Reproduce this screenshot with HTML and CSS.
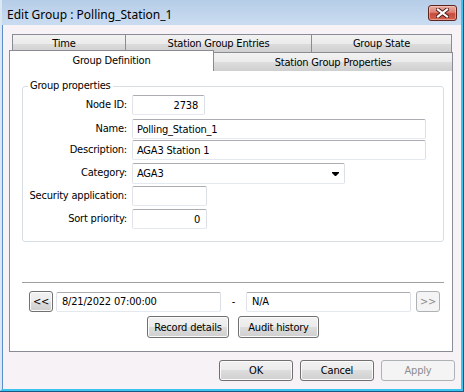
FILE: index.html
```html
<!DOCTYPE html>
<html lang="en">
<head>
	<meta charset="UTF-8">
	<title>Edit Group</title>
	<link rel="stylesheet" href="styles.css">
</head>
<body>
<div class="window">
	<div class="titlebar">
		<span class="title">Edit Group : Polling_Station_1</span>
		<div class="close">
			<svg width="13" height="10" viewBox="0 0 13 10">
				<path d="M2 1.5L11 8.5M11 1.5L2 8.5" stroke="#4a1a16" stroke-width="4" stroke-linecap="square"/>
				<path d="M2 1.5L11 8.5M11 1.5L2 8.5" stroke="#ffffff" stroke-width="2.2" stroke-linecap="square"/>
			</svg>
		</div>
	</div>
	<div class="client">
		<div class="tabrow top">
			<div class="tab t-time">Time</div>
			<div class="tab t-entries">Station Group Entries</div>
			<div class="tab t-state">Group State</div>
		</div>
		<div class="tabrow bottom">
			<div class="tab active">Group Definition</div>
			<div class="tab t-props">Station Group Properties</div>
		</div>
		<div class="panel">
			<fieldset class="group">
				<legend>Group properties</legend>
				<div class="fields">
					<label>Node ID:</label>
					<div class="edit num w-id">2738</div>
					<label>Name:</label>
					<div class="edit w-long">Polling_Station_1</div>
					<label>Description:</label>
					<div class="edit w-long">AGA3 Station 1</div>
					<label>Category:</label>
					<div class="edit combo">
						<span>AGA3</span>
						<svg width="7" height="4" viewBox="0 0 7 4"><path d="M0 0H7V1L4 4H3L0 1Z" fill="#000"/></svg>
					</div>
					<label>Security application:</label>
					<div class="edit w-short"></div>
					<label>Sort priority:</label>
					<div class="edit num w-short">0</div>
				</div>
			</fieldset>
			<div class="sep"></div>
			<div class="nav">
				<div class="btn small">&lt;&lt;</div>
				<div class="edit date">8/21/2022 07:00:00</div>
				<span class="dash">-</span>
				<div class="edit date to">N/A</div>
				<div class="btn small disabled">&gt;&gt;</div>
			</div>
			<div class="actions">
				<div class="btn w-record">Record details</div>
				<div class="btn w-audit">Audit history</div>
			</div>
		</div>
		<div class="footer">
			<div class="btn dlg">OK</div>
			<div class="btn dlg">Cancel</div>
			<div class="btn dlg disabled">Apply</div>
		</div>
	</div>
</div>
</body>
</html>
```

FILE: styles.css
```css
*{
	margin: 0;
	padding: 0;
	box-sizing: border-box;
}
html, body{width:464px; height:392px; overflow:hidden;}
body{background:#1b5783; font-family:"DejaVu Sans Condensed", "DejaVu Sans", sans-serif; font-size:11px; letter-spacing:-0.2px; color:#000;}

.window{width:463px; height:391px; background:#f6f2f6; border-left:2px solid #dce7f4; border-right:2px solid #3cc4f1; border-bottom:2px solid #3cc4f1; box-shadow:inset 1px 0 0 #5b8dc9;}

.titlebar{height:25px; display:flex; align-items:flex-start; background:linear-gradient(to bottom, #b6cde8, #cadcf0);}
.title{font-family:"Noto Sans", sans-serif; font-size:12px; letter-spacing:0; line-height:17px; margin:6px 0 0 5px; color:#000;}
.close{width:29px; height:16px; margin:5px 4px 0 auto; border:1px solid #5e2420; border-radius:3px; display:flex; align-items:center; justify-content:center;
	background:linear-gradient(to bottom, #e9aca2 0%, #dc8274 45%, #c84a3b 55%, #d2634f 100%); box-shadow:inset 0 0 0 1px rgba(255,220,210,.45);}

.client{padding:9px 6px 0 7px;}

.tabrow{display:flex;}
.tabrow.top{margin-left:3px; height:18px;}
.tab{border:1px solid #898c95; border-bottom:none; display:flex; align-items:center; justify-content:center; white-space:nowrap;
	background:linear-gradient(to bottom, #f2f2f2 0%, #ebebeb 50%, #dddddd 50%, #cfcfcf 100%);}
.top .tab{height:18px; border-right:none;}
.top .t-state{border-right:1px solid #898c95;}
.t-time{width:113px; padding-right:10px;}
.t-entries{width:186px;}
.t-state{width:141px;}
.tabrow.bottom{margin-top:-2px; height:21px; align-items:flex-end;}
.tab.active{width:205px; height:21px; background:#fff; position:relative; z-index:1; padding-bottom:1px;}
.t-props{width:239px; height:19px; border-left:none; padding-top:1px;}

.panel{margin-top:-1px; width:444px; height:282px; background:#fff; border:1px solid #898c95;}

.group{width:422px; margin:8px 0 0 12px; border:1px solid #d5dfe5; border-radius:3px; padding:2px 0 12px 0;}
.group legend{margin-left:5px; padding:0 2px; line-height:14px;}
.fields{display:grid; grid-template-columns:104px auto; column-gap:5px; grid-template-rows:24px 21px 23px 23px 23px 20px; align-items:start;}
.fields label{text-align:right; line-height:20px; white-space:nowrap;}

.edit{height:20px; background:#fff; border:1px solid; border-color:#abadb3 #dbdfe6 #e3e9ef #e2e3ea; border-radius:2px; padding:0 4px; display:flex; align-items:center; white-space:nowrap; justify-self:start;}
.edit.num{justify-content:flex-end; padding-right:6px;}
.w-id{width:73px;}
.w-long{width:294px;}
.w-short{width:75px;}
.combo{width:213px; height:21px; justify-content:space-between; padding-right:5px;}

.sep{width:422px; height:1px; margin:40px 0 0 12px; background:#a0a0a0;}

.nav{display:flex; align-items:center; height:21px; margin:8px 0 0 19px;}
.edit.date{width:165px; margin-left:3px; padding-left:5px;}
.edit.date.to{margin-left:0;}
.dash{width:25px; text-align:center;}
.nav .disabled{margin-left:5px;}

.btn{height:21px; border:1px solid #707070; border-radius:3px; display:flex; align-items:center; justify-content:center; white-space:nowrap;
	background:linear-gradient(to bottom, #f2f2f2 0%, #ebebeb 50%, #dddddd 50%, #cfcfcf 100%); box-shadow:inset 0 0 0 1px #fbfbfb;}
.btn.small{width:24px;}
.btn.disabled{border-color:#adb2b5; background:#f4f4f4; color:#8d8d8d; box-shadow:none;}

.actions{display:flex; gap:9px; margin:4px 0 0 137px;}
.actions .btn{height:22px;}
.w-record{width:82px;}
.w-audit{width:81px;}

.footer{display:flex; justify-content:flex-end; gap:7px; margin-top:8px;}
.btn.dlg{width:74px;}
```
